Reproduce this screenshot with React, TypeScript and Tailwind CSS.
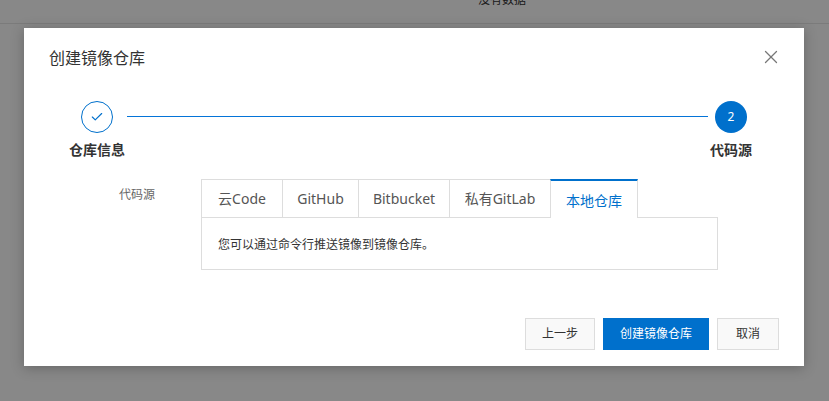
import { X, Check } from "lucide-react";

const tabs = ["云Code", "GitHub", "Bitbucket", "私有GitLab", "本地仓库"];
const tabWidths = ["w-[81px]", "w-[76px]", "w-[91px]", "w-[101px]", "w-[88px]"];

export default function App() {
  const active = 4;
  return (
    <div
      className="relative w-[829px] h-[401px] overflow-hidden bg-white"
      style={{ fontFamily: '"Noto Sans", "Noto Sans CJK SC", sans-serif' }}
    >
      {/* page behind the dialog */}
      <div className="h-[24px] border-b border-[#e6e6e6] flex justify-center">
        <span className="ml-[175px] -mt-[8px] text-[12px] leading-[16px] text-[#333]">没有数据</span>
      </div>

      {/* overlay */}
      <div className="absolute inset-0 bg-black/[0.465]">
        <div className="ml-[24px] mt-[28px] w-[780px] h-[338px] bg-white shadow-[0_2px_12px_rgba(0,0,0,0.25)] flex flex-col">
          <div className="flex items-center justify-between pl-[25px] pr-[22px] pt-[19px] h-[40px]">
            <h2 className="text-[16px] leading-[20px] text-[#333]">创建镜像仓库</h2>
            <X size={22} strokeWidth={1.4} className="text-[#777] mt-[-2px]" />
          </div>

          {/* stepper */}
          <div className="pl-[45px] pr-[52px] mt-[33px]">
            <div className="flex items-start">
              <div className="w-[56px] flex justify-center">
                <div className="w-[32px] h-[32px] rounded-full border border-[#0070cc] flex items-center justify-center">
                  <Check size={14} strokeWidth={2} className="text-[#0070cc]" />
                </div>
              </div>
              <div className="flex-1 mx-[2px] mt-[15px] h-px bg-[#0474d8]" />
              <div className="w-[42px] flex justify-center">
                <div className="w-[32px] h-[32px] rounded-full bg-[#0070cc] flex items-center justify-center text-white text-[12px]">
                  2
                </div>
              </div>
            </div>
            <div className="flex justify-between mt-[8px] text-[14px] leading-[18px] font-bold text-[#333]">
              <span className="w-[56px] text-center">仓库信息</span>
              <span className="w-[42px] text-center">代码源</span>
            </div>
          </div>

          {/* form */}
          <div className="flex mt-[20px]">
            <div className="w-[177px] pl-[95px] pt-[8px] text-[12px] leading-[16px] text-[#666]">代码源</div>
            <div className="w-[517px]">
              <div className="flex h-[39px] relative z-10">
                {tabs.map((t, i) => (
                  <div
                    key={t}
                    className={`${tabWidths[i]} h-[39px] flex items-center justify-center text-[14px] bg-white border-l border-[#ddd] ${
                      i === tabs.length - 1 ? "border-r" : ""
                    } ${
                      i === active
                        ? "border-t-2 border-t-[#0070cc] text-[#0070cc] pt-[1px]"
                        : "border-t border-b text-[#555]"
                    }`}
                  >
                    {t}
                  </div>
                ))}
              </div>
              <div className="-mt-px h-[53px] border border-[#ddd] px-[16px] pt-[19px] text-[12px] leading-[16px] text-[#333]">
                您可以通过命令行推送镜像到镜像仓库。
              </div>
            </div>
          </div>

          {/* footer */}
          <div className="mt-auto mb-[16px] pr-[25px] flex justify-end gap-[8px] text-[12px]">
            <button className="w-[70px] h-[32px] bg-[#f9f9f9] border border-[#ddd] text-[#333]">上一步</button>
            <button className="w-[106px] h-[32px] bg-[#0070cc] text-white">创建镜像仓库</button>
            <button className="w-[62px] h-[32px] bg-[#f9f9f9] border border-[#ddd] text-[#333]">取消</button>
          </div>
        </div>
      </div>
    </div>
  );
}
